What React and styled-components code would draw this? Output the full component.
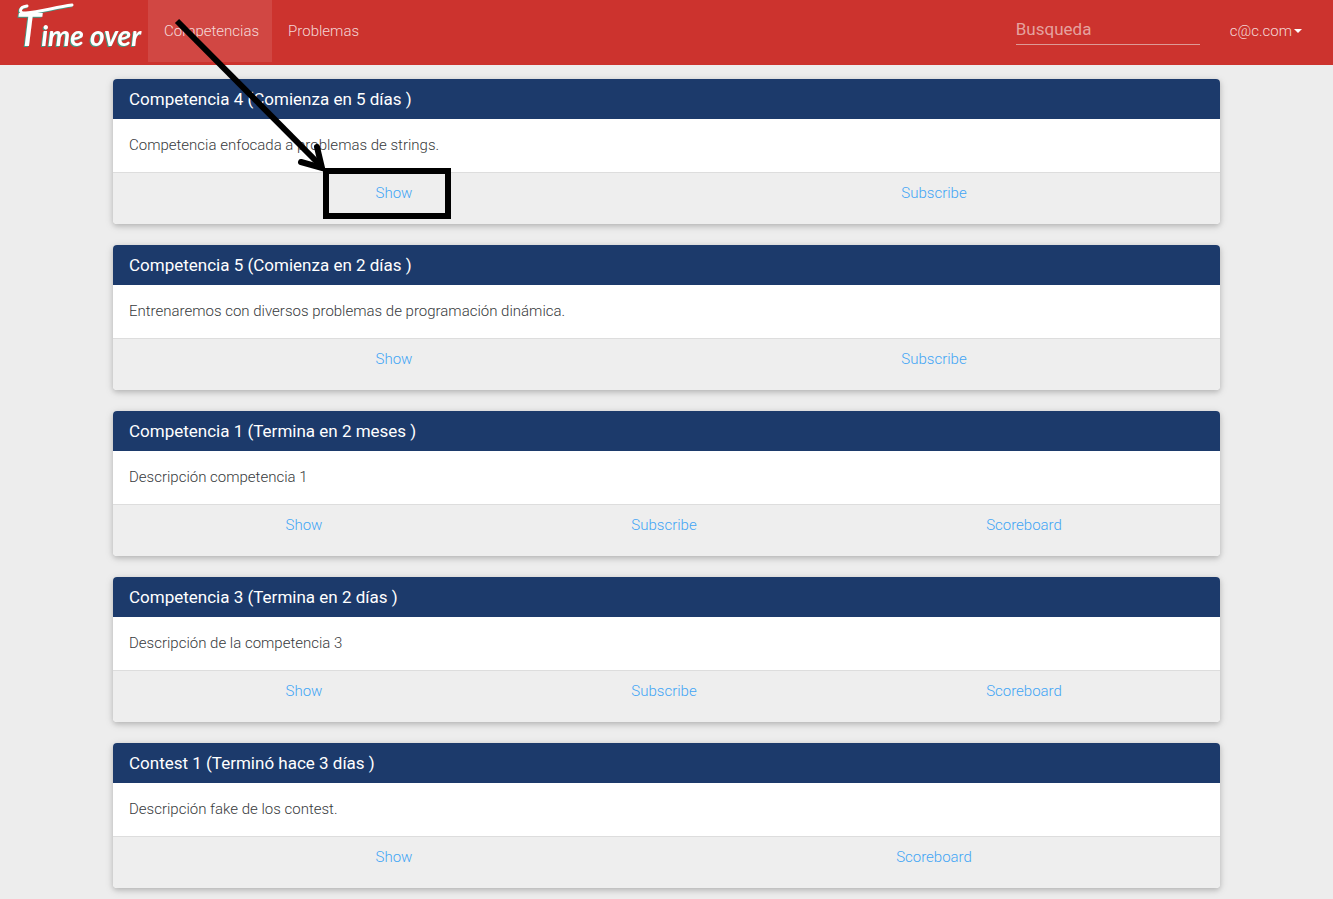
import React from 'react';
import styled, { createGlobalStyle } from 'styled-components';

const GlobalStyle = createGlobalStyle`
  * { box-sizing: border-box; }
  body {
    margin: 0;
    background: #ededed;
    color: #373a3c;
    font-family: Roboto, "Liberation Sans", sans-serif;
    font-size: 15px;
    font-weight: 300;
    line-height: 24px;
  }
`;

const Page = styled.div`
  position: relative;
`;

const Navbar = styled.header`
  display: flex;
  align-items: flex-start;
  height: 65px;
  padding-right: 31px;
  background: #cc332e;
`;

const Brand = styled.a`
  display: block;
  width: 148px;
  height: 62px;
`;

const Logo = styled.svg`
  display: block;
  font-family: Lato, sans-serif;
  font-style: italic;
  font-weight: 700;
  filter: drop-shadow(-1px 1px 0 #3f9a86);
`;

const Nav = styled.nav`
  display: flex;
  flex: 1;
`;

const NavLink = styled.a`
  height: 62px;
  padding: 19px 13px 19px 16px;
  color: rgba(255, 255, 255, 0.8);
  background: ${(p) => (p.$active ? 'rgba(255, 255, 255, 0.1)' : 'transparent')};
  text-decoration: none;
`;

const SearchInput = styled.input`
  width: 184px;
  height: 28px;
  margin: 17px 30px 0 0;
  padding: 0 0 3px;
  border: 0;
  border-bottom: 1px solid #dd9a96;
  background: transparent;
  color: #fff;
  font: 400 17px/24px Roboto, sans-serif;
  outline: 0;
  &::placeholder { color: #e5a29f; opacity: 1; }
`;

const AccountButton = styled.button`
  display: flex;
  align-items: center;
  gap: 2px;
  margin: 19px 0 0;
  padding: 0;
  border: 0;
  background: transparent;
  color: rgba(255, 255, 255, 0.8);
  font: inherit;
`;

const Caret = styled.span`
  border: 4px solid transparent;
  border-top-color: #fff;
  border-bottom: 0;
`;

const Contests = styled.main`
  display: flex;
  flex-direction: column;
  gap: 21px;
  padding: 14px 113px 10px;
`;

const Card = styled.article`
  border-radius: 4px;
  background: #fff;
  box-shadow: 0 2px 5px rgba(0, 0, 0, 0.16), 0 2px 10px rgba(0, 0, 0, 0.12);
`;

const CardTitle = styled.h2`
  margin: 0;
  padding: 8px 16px;
  border-radius: 4px 4px 0 0;
  background: #1c3a6b;
  color: #fff;
  font-size: 17px;
  font-weight: 400;
  line-height: 24px;
`;

const Description = styled.p`
  margin: 0;
  padding: 14px 16px 15px;
`;

const CardFooter = styled.footer`
  display: flex;
  height: 52px;
  padding: 8px 16px 0 11px;
  border-top: 1px solid #dddddd;
  border-radius: 0 0 4px 4px;
  background: #eeeeee;
`;

const Action = styled.div`
  flex: 1;
  text-align: center;
`;

const ActionLink = styled.a`
  color: #42a5f5;
  text-decoration: none;
`;

const Annotation = styled.svg`
  position: absolute;
  top: 0;
  left: 0;
  pointer-events: none;
`;

const contests = [
  {
    title: 'Competencia 4 (Comienza en 5 días )',
    text: 'Competencia enfocada a problemas de strings.',
    actions: ['Show', 'Subscribe'],
  },
  {
    title: 'Competencia 5 (Comienza en 2 días )',
    text: 'Entrenaremos con diversos problemas de programación dinámica.',
    actions: ['Show', 'Subscribe'],
  },
  {
    title: 'Competencia 1 (Termina en 2 meses )',
    text: 'Descripción competencia 1',
    actions: ['Show', 'Subscribe', 'Scoreboard'],
  },
  {
    title: 'Competencia 3 (Termina en 2 días )',
    text: 'Descripción de la competencia 3',
    actions: ['Show', 'Subscribe', 'Scoreboard'],
  },
  {
    title: 'Contest 1 (Terminó hace 3 días )',
    text: 'Descripción fake de los contest.',
    actions: ['Show', 'Scoreboard'],
  },
];

export default function App() {
  return (
    <Page>
      <GlobalStyle />
      <Navbar>
        <Brand href="#" aria-label="Time over">
          <Logo width="148" height="62" viewBox="0 0 148 62" fill="#fff">
            <path
              d="M27 6 C19 7 18 14 26 13 C40 12 56 7 72 5"
              fill="none"
              stroke="#fff"
              strokeWidth="3"
              strokeLinecap="round"
            />
            <text x="16" y="46" fontSize="46" fontWeight="400">
              T<tspan fontSize="28" fontWeight="700">ime over</tspan>
            </text>
          </Logo>
        </Brand>
        <Nav>
          <NavLink href="#" $active>Competencias</NavLink>
          <NavLink href="#">Problemas</NavLink>
        </Nav>
        <SearchInput type="search" placeholder="Busqueda" aria-label="Busqueda" />
        <AccountButton type="button">
          c@c.com
          <Caret />
        </AccountButton>
      </Navbar>
      <Contests>
        {contests.map((c) => (
          <Card key={c.title}>
            <CardTitle>{c.title}</CardTitle>
            <Description>{c.text}</Description>
            <CardFooter>
              {c.actions.map((a) => (
                <Action key={a}>
                  <ActionLink href="#">{a}</ActionLink>
                </Action>
              ))}
            </CardFooter>
          </Card>
        ))}
      </Contests>
      <Annotation width="460" height="225" fill="none" stroke="#000" strokeWidth="6" aria-hidden="true">
        <path d="M177 21 L322 167" />
        <path d="M317 147 L322 168 L301 162" strokeLinecap="round" />
        <rect x="326" y="171" width="122" height="45" />
      </Annotation>
    </Page>
  );
}
